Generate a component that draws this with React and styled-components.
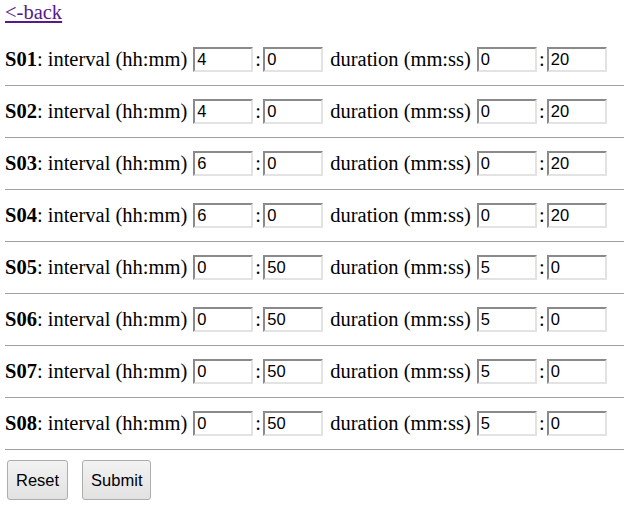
import React from "react";
import styled, { createGlobalStyle } from "styled-components";

const Global = createGlobalStyle`
  html, body { margin: 0; padding: 0; background: #fff; }
  body { font-family: "Liberation Serif", "Times New Roman", serif; font-size: 20.5px; color: #000; }
`;

const Page = styled.div`
  padding-left: 5px;
`;

const Header = styled.div`
  height: 34px;
  line-height: 24px;
`;

const BackLink = styled.a`
  color: #551a8b;
  text-decoration: underline;
`;

const Row = styled.div`
  display: flex;
  align-items: center;
  height: 25px;
  padding: 13px 0;
  border-bottom: 1px solid #a0a0a0;
  white-space: pre;
`;

const Name = styled.b`
  font-weight: bold;
`;

const Label = styled.span`
  margin: 0 6px 0 0;
`;

const Gap = styled.span`
  display: inline-block;
  width: ${(p) => p.w}px;
`;

const Colon = styled.span`
  display: inline-block;
  width: 10px;
  text-align: center;
`;

const Field = styled.input`
  box-sizing: border-box;
  width: 60px;
  height: 25px;
  margin: 0;
  padding: 1px 2px;
  font-family: "Liberation Sans", Arial, sans-serif;
  font-size: 16.5px;
  color: #000;
  background: #fff;
  border-style: solid;
  border-width: 2px;
  border-color: #8a8a8a #e3e3e3 #e3e3e3 #8a8a8a;
  outline: none;
`;

const Buttons = styled.div`
  display: flex;
  gap: 14px;
  padding: 10px 0 0 2px;
`;

const Button = styled.button`
  height: 40px;
  padding: 0 ${(p) => p.px}px;
  font-family: "Liberation Sans", Arial, sans-serif;
  font-size: 16.5px;
  color: #000;
  background: linear-gradient(#f2f2f2, #e2e2e2);
  border: 1px solid #adadad;
  border-radius: 3px;
`;

const rows = [
  ["S01", "4", "0", "0", "20"],
  ["S02", "4", "0", "0", "20"],
  ["S03", "6", "0", "0", "20"],
  ["S04", "6", "0", "0", "20"],
  ["S05", "0", "50", "5", "0"],
  ["S06", "0", "50", "5", "0"],
  ["S07", "0", "50", "5", "0"],
  ["S08", "0", "50", "5", "0"],
];

export default function App() {
  return (
    <Page>
      <Global />
      <Header>
        <BackLink href="#">&lt;-back</BackLink>
      </Header>
      {rows.map(([n, a, b, c, d]) => (
        <Row key={n}>
          <Name>{n}</Name>
          <Label>: interval (hh:mm)</Label>
          <Field defaultValue={a} />
          <Colon>:</Colon>
          <Field defaultValue={b} />
          <Gap w={7} />
          <Label>duration (mm:ss)</Label>
          <Field defaultValue={c} />
          <Colon>:</Colon>
          <Field defaultValue={d} />
        </Row>
      ))}
      <Buttons>
        <Button px={8}>Reset</Button>
        <Button px={8}>Submit</Button>
      </Buttons>
    </Page>
  );
}
